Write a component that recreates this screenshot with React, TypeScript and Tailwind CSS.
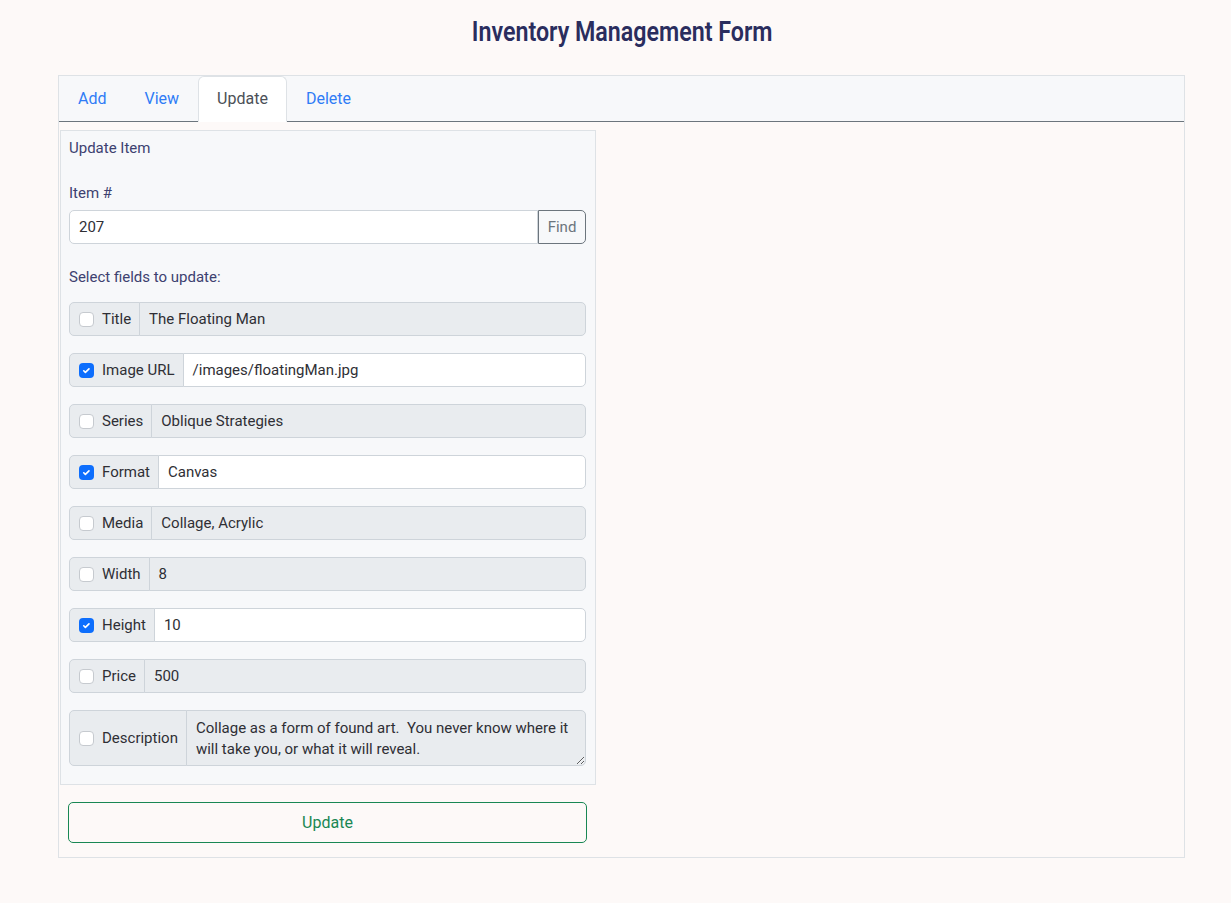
import React from "react";

type Field = { label: string; value: string; checked: boolean; multiline?: boolean };

const fields: Field[] = [
  { label: "Title", value: "The Floating Man", checked: false },
  { label: "Image URL", value: "/images/floatingMan.jpg", checked: true },
  { label: "Series", value: "Oblique Strategies", checked: false },
  { label: "Format", value: "Canvas", checked: true },
  { label: "Media", value: "Collage, Acrylic", checked: false },
  { label: "Width", value: "8", checked: false },
  { label: "Height", value: "10", checked: true },
  { label: "Price", value: "500", checked: false },
  {
    label: "Description",
    value: "Collage as a form of found art.  You never know where it will take you, or what it will reveal.",
    checked: false,
    multiline: true,
  },
];

function CheckBox({ checked }: { checked: boolean }) {
  if (checked) {
    return (
      <span className="flex h-[15px] w-[15px] shrink-0 items-center justify-center rounded-[4px] bg-[#0d6efd]">
        <svg width="11" height="11" viewBox="0 0 20 20" fill="none">
          <path d="M5 10.5l3 3 6.5-6.5" stroke="#fff" strokeWidth="3" strokeLinecap="round" strokeLinejoin="round" />
        </svg>
      </span>
    );
  }
  return <span className="block h-[15px] w-[15px] shrink-0 rounded-[4px] border border-[#c6cacf] bg-white" />;
}

function FieldRow({ f }: { f: Field }) {
  const bg = f.checked ? "bg-white" : "bg-[#e9ecef]";
  return (
    <div className={`flex ${f.multiline ? "h-[56px]" : "h-[34px]"} w-full`}>
      <div className="flex shrink-0 items-center gap-[8px] rounded-l-[5px] border border-[#ced4da] bg-[#e9ecef] pl-[9px] pr-[8px] text-[#2f2f35]">
        <CheckBox checked={f.checked} />
        <span>{f.label}</span>
      </div>
      {f.multiline ? (
        <textarea
          readOnly
          rows={2}
          value={f.value}
          className={`-ml-px min-w-0 flex-1 rounded-r-[5px] border border-[#ced4da] ${bg} px-[9px] pt-[7px] text-[15px] leading-[21px] text-[#2f2f35] outline-none`}
        />
      ) : (
        <div
          className={`-ml-px flex min-w-0 flex-1 items-center rounded-r-[5px] border border-[#ced4da] ${bg} px-[9px] text-[#2f2f35]`}
        >
          {f.value}
        </div>
      )}
    </div>
  );
}

export default function App() {
  return (
    <div
      className="min-h-screen bg-[#fdf9f8] text-[15px] leading-[22px]"
      style={{ fontFamily: "Roboto, 'Noto Sans', sans-serif" }}
    >
      <div className="flex justify-center pl-[13px] pt-[12px]">
        <h1
          className="inline-block scale-x-[0.83] whitespace-nowrap text-[28px] font-semibold leading-[40px] text-[#2a2d5e]"
          style={{ fontFamily: "Roboto, sans-serif" }}
        >
          Inventory Management Form
        </h1>
      </div>
      <div className="ml-[58px] mt-[23px] w-[1127px] border border-[#dee2e6]">
        <div className="flex h-[46px] items-end border-b border-[#6c757d] bg-[#f7f8fa] pl-0">
          {["Add", "View", "Update", "Delete"].map((t) => {
            const active = t === "Update";
            return (
              <div
                key={t}
                className={`-mb-px flex h-[46px] items-center rounded-t-[6px] border px-[18px] text-[16px] ${
                  active
                    ? "border-[#dee2e6] border-b-white bg-white text-[#4b5057]"
                    : "border-transparent text-[#2f7cf6]"
                }`}
              >
                {t}
              </div>
            );
          })}
        </div>
        <div className="pb-[14px] pt-[8px]">
          <div className="ml-px w-[536px] border border-[#dee2e6] bg-[#f7f8fa] pb-[18px] pl-[8px] pr-[9px] pt-[6px] text-[#3d4170]">
            <div>Update Item</div>
            <div className="mt-[23px]">Item #</div>
            <div className="mt-[6px] flex h-[34px]">
              <div className="flex min-w-0 flex-1 items-center rounded-l-[5px] border border-[#ced4da] bg-white px-[9px] text-[#2f2f35]">
                207
              </div>
              <div className="flex w-[48px] items-center justify-center rounded-r-[5px] border border-[#6c757d] text-[#6c757d]">
                Find
              </div>
            </div>
            <div className="mt-[22px]">Select fields to update:</div>
            <div className="mt-[14px] flex flex-col gap-[17px]">
              {fields.map((f) => (
                <FieldRow key={f.label} f={f} />
              ))}
            </div>
          </div>
          <div className="ml-[9px] mt-[17px] flex h-[41px] w-[519px] items-center justify-center rounded-[5px] border border-[#198754] text-[16px] text-[#198754]">
            Update
          </div>
        </div>
      </div>
    </div>
  );
}
